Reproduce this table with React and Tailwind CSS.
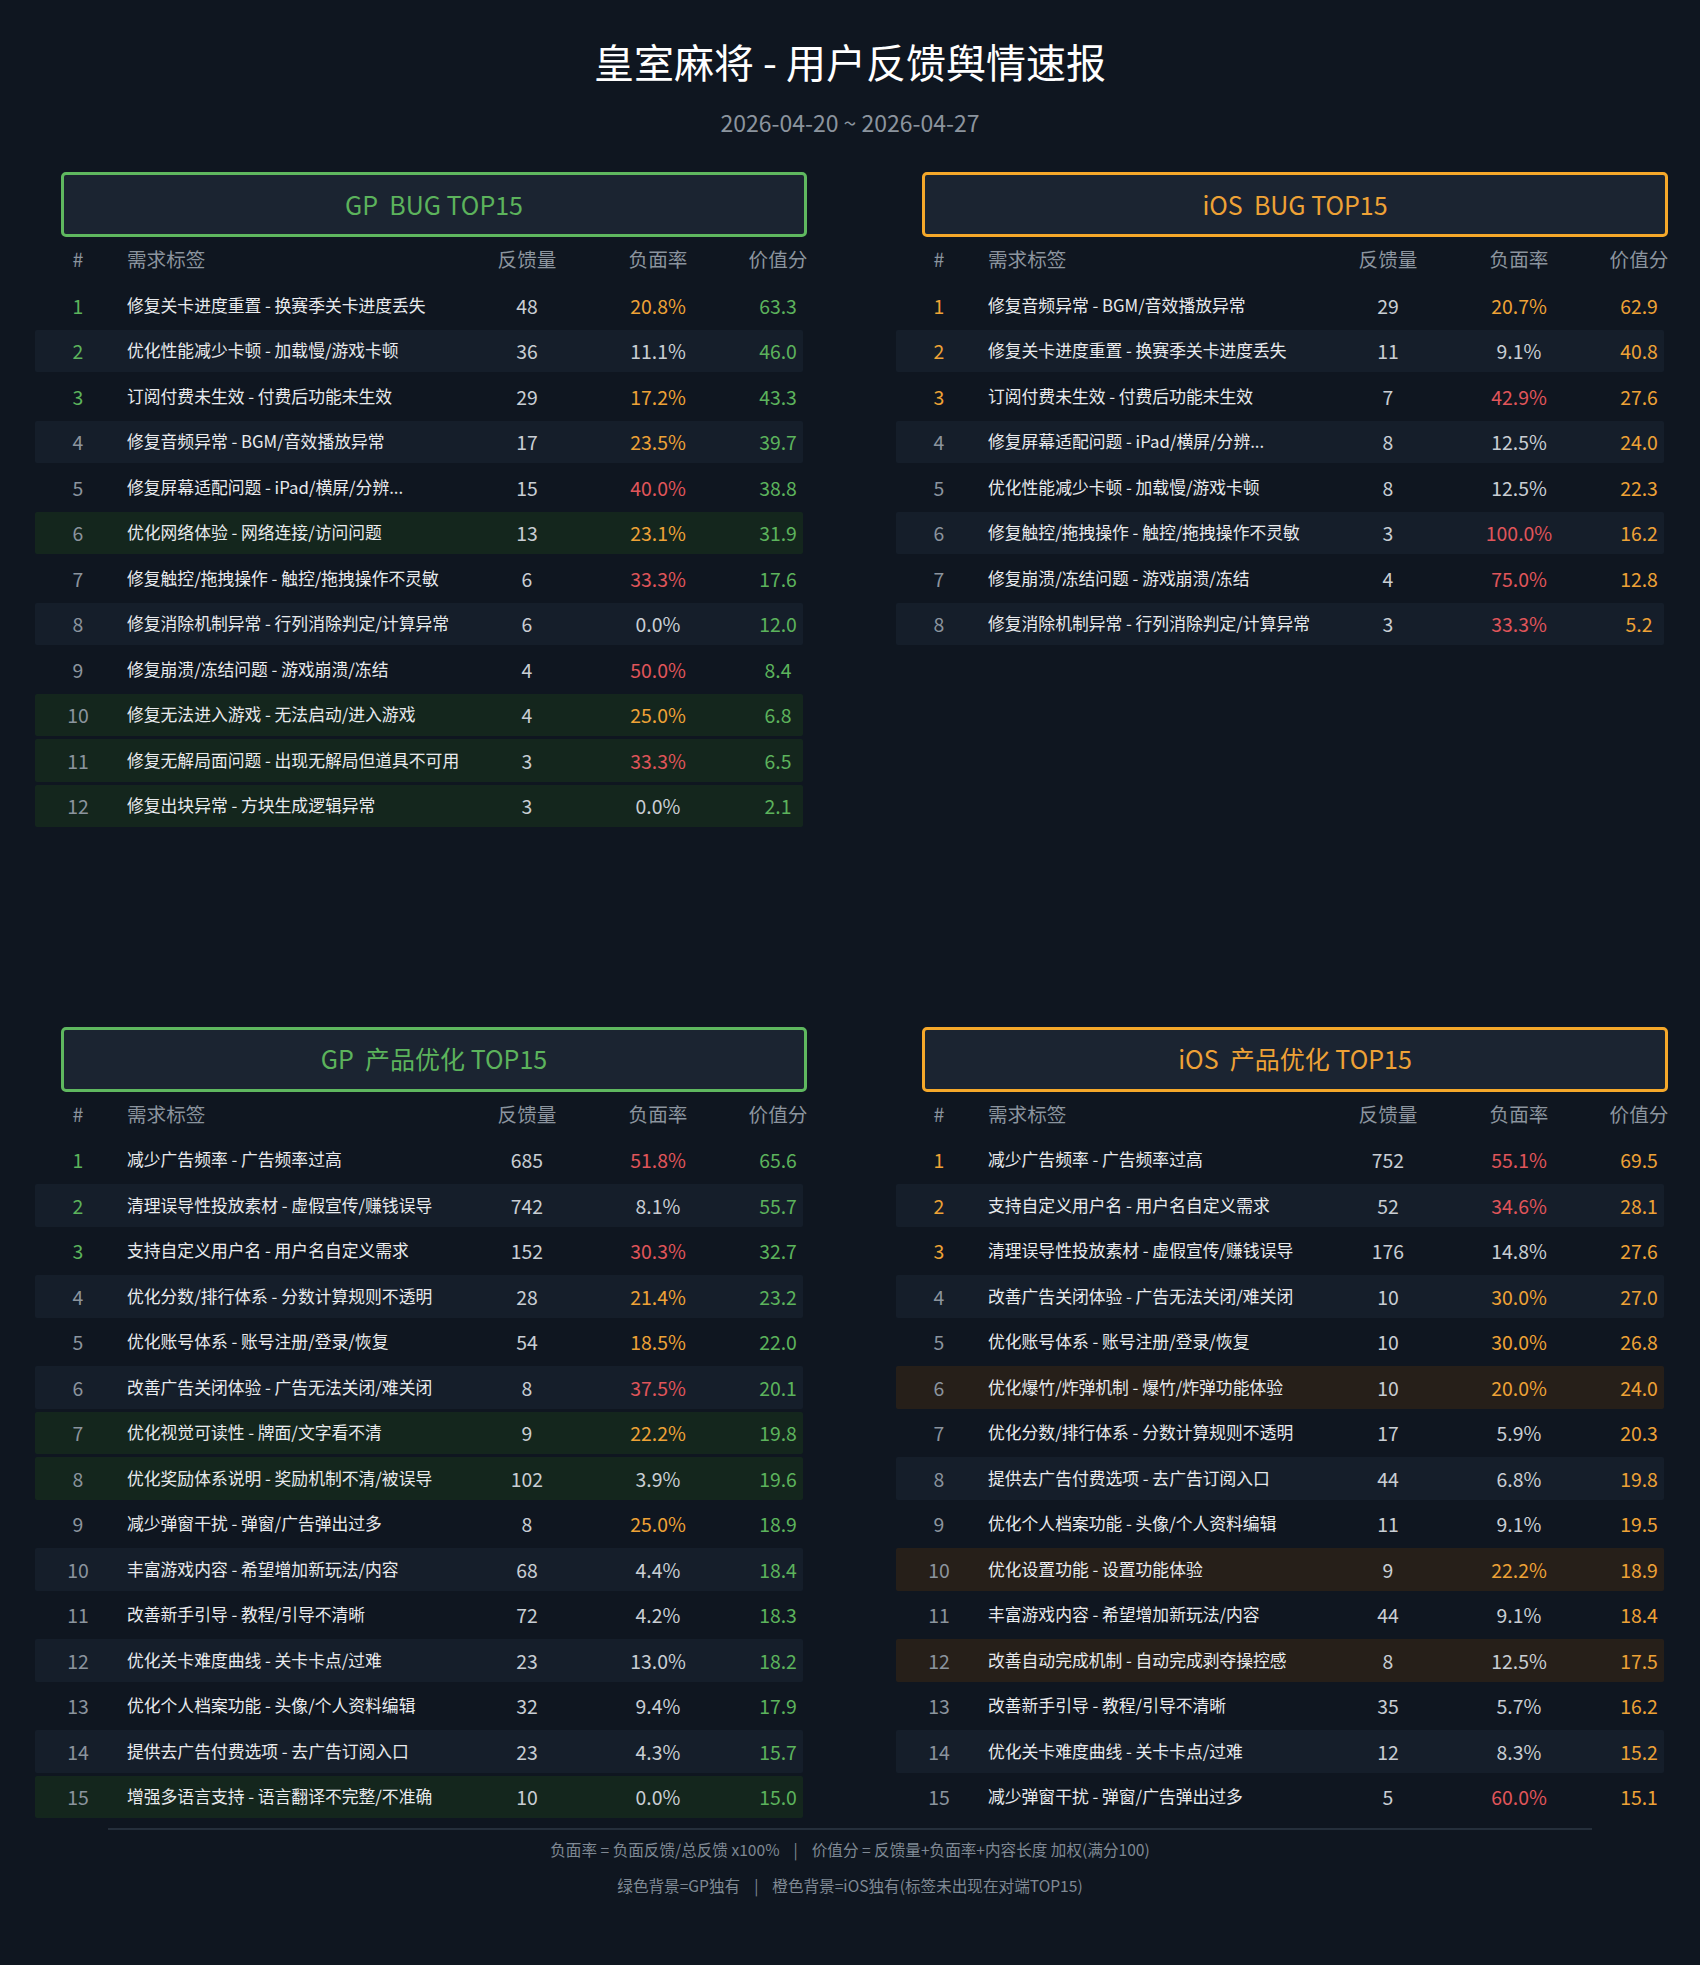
const gpBug = [
  ['修复关卡进度重置 - 换赛季关卡进度丢失', 48, 20.8, '63.3'],
  ['优化性能减少卡顿 - 加载慢/游戏卡顿', 36, 11.1, '46.0'],
  ['订阅付费未生效 - 付费后功能未生效', 29, 17.2, '43.3'],
  ['修复音频异常 - BGM/音效播放异常', 17, 23.5, '39.7'],
  ['修复屏幕适配问题 - iPad/横屏/分辨...', 15, 40.0, '38.8'],
  ['优化网络体验 - 网络连接/访问问题', 13, 23.1, '31.9', true],
  ['修复触控/拖拽操作 - 触控/拖拽操作不灵敏', 6, 33.3, '17.6'],
  ['修复消除机制异常 - 行列消除判定/计算异常', 6, 0.0, '12.0'],
  ['修复崩溃/冻结问题 - 游戏崩溃/冻结', 4, 50.0, '8.4'],
  ['修复无法进入游戏 - 无法启动/进入游戏', 4, 25.0, '6.8', true],
  ['修复无解局面问题 - 出现无解局但道具不可用', 3, 33.3, '6.5', true],
  ['修复出块异常 - 方块生成逻辑异常', 3, 0.0, '2.1', true],
];

const iosBug = [
  ['修复音频异常 - BGM/音效播放异常', 29, 20.7, '62.9'],
  ['修复关卡进度重置 - 换赛季关卡进度丢失', 11, 9.1, '40.8'],
  ['订阅付费未生效 - 付费后功能未生效', 7, 42.9, '27.6'],
  ['修复屏幕适配问题 - iPad/横屏/分辨...', 8, 12.5, '24.0'],
  ['优化性能减少卡顿 - 加载慢/游戏卡顿', 8, 12.5, '22.3'],
  ['修复触控/拖拽操作 - 触控/拖拽操作不灵敏', 3, 100.0, '16.2'],
  ['修复崩溃/冻结问题 - 游戏崩溃/冻结', 4, 75.0, '12.8'],
  ['修复消除机制异常 - 行列消除判定/计算异常', 3, 33.3, '5.2'],
];

const gpProduct = [
  ['减少广告频率 - 广告频率过高', 685, 51.8, '65.6'],
  ['清理误导性投放素材 - 虚假宣传/赚钱误导', 742, 8.1, '55.7'],
  ['支持自定义用户名 - 用户名自定义需求', 152, 30.3, '32.7'],
  ['优化分数/排行体系 - 分数计算规则不透明', 28, 21.4, '23.2'],
  ['优化账号体系 - 账号注册/登录/恢复', 54, 18.5, '22.0'],
  ['改善广告关闭体验 - 广告无法关闭/难关闭', 8, 37.5, '20.1'],
  ['优化视觉可读性 - 牌面/文字看不清', 9, 22.2, '19.8', true],
  ['优化奖励体系说明 - 奖励机制不清/被误导', 102, 3.9, '19.6', true],
  ['减少弹窗干扰 - 弹窗/广告弹出过多', 8, 25.0, '18.9'],
  ['丰富游戏内容 - 希望增加新玩法/内容', 68, 4.4, '18.4'],
  ['改善新手引导 - 教程/引导不清晰', 72, 4.2, '18.3'],
  ['优化关卡难度曲线 - 关卡卡点/过难', 23, 13.0, '18.2'],
  ['优化个人档案功能 - 头像/个人资料编辑', 32, 9.4, '17.9'],
  ['提供去广告付费选项 - 去广告订阅入口', 23, 4.3, '15.7'],
  ['增强多语言支持 - 语言翻译不完整/不准确', 10, 0.0, '15.0', true],
];

const iosProduct = [
  ['减少广告频率 - 广告频率过高', 752, 55.1, '69.5'],
  ['支持自定义用户名 - 用户名自定义需求', 52, 34.6, '28.1'],
  ['清理误导性投放素材 - 虚假宣传/赚钱误导', 176, 14.8, '27.6'],
  ['改善广告关闭体验 - 广告无法关闭/难关闭', 10, 30.0, '27.0'],
  ['优化账号体系 - 账号注册/登录/恢复', 10, 30.0, '26.8'],
  ['优化爆竹/炸弹机制 - 爆竹/炸弹功能体验', 10, 20.0, '24.0', true],
  ['优化分数/排行体系 - 分数计算规则不透明', 17, 5.9, '20.3'],
  ['提供去广告付费选项 - 去广告订阅入口', 44, 6.8, '19.8'],
  ['优化个人档案功能 - 头像/个人资料编辑', 11, 9.1, '19.5'],
  ['优化设置功能 - 设置功能体验', 9, 22.2, '18.9', true],
  ['丰富游戏内容 - 希望增加新玩法/内容', 44, 9.1, '18.4'],
  ['改善自动完成机制 - 自动完成剥夺操控感', 8, 12.5, '17.5', true],
  ['改善新手引导 - 教程/引导不清晰', 35, 5.7, '16.2'],
  ['优化关卡难度曲线 - 关卡卡点/过难', 12, 8.3, '15.2'],
  ['减少弹窗干扰 - 弹窗/广告弹出过多', 5, 60.0, '15.1'],
];

// negative rate colour: >30 red, >=15 orange, else plain
function rateColor(rate) {
  if (rate > 30) return 'text-[#e0555a]';
  if (rate >= 15) return 'text-[#eea236]';
  return 'text-[#c9ced4]';
}

function Panel({ platform, title, rows }) {
  const gp = platform === 'GP';
  const accent = gp ? 'text-[#5cb35c]' : 'text-[#eea236]';
  const uniqueBg = gp ? 'bg-[#14261d]' : 'bg-[#261f19]';

  return (
    <div className="w-[773px]">
      <div
        className={`ml-[26px] flex h-[65px] w-[746px] items-center justify-center rounded-[5px] border-[3px] bg-[#1b2431] text-[25px] ${
          gp ? 'border-[#5fb85f]' : 'border-[#f5a82a]'
        } ${accent}`}
      >
        <span className="whitespace-pre">
          {platform}
          {'  '}
          {title}
        </span>
      </div>

      <div className="flex h-[44px] w-[768px] items-center text-[19.6px] text-[#8b949e]">
        <div className="w-[86px] shrink-0 text-center">#</div>
        <div className="w-[341px] shrink-0 pl-[6px]">需求标签</div>
        <div className="w-[130px] shrink-0 text-center">反馈量</div>
        <div className="w-[132px] shrink-0 text-center">负面率</div>
        <div className="w-[108px] shrink-0 text-center">价值分</div>
      </div>

      <div className="h-[682.5px]">
        {rows.map(([label, count, rate, score, unique], i) => {
          const rank = i + 1;
          let bg = '';
          if (unique) bg = uniqueBg;
          else if (rank % 2 === 0) bg = 'bg-[#151e2a]';
          return (
            <div
              key={label}
              className={`mt-[3px] flex h-[42.5px] w-[768px] items-center rounded-[2px] text-[19.4px] ${bg}`}
            >
              <div
                className={`w-[86px] shrink-0 text-center ${
                  rank <= 3 ? accent : 'text-[#8b949e]'
                }`}
              >
                {rank}
              </div>
              <div className="w-[341px] shrink-0 whitespace-nowrap pl-[6px] text-[16.8px] text-[#e8eaed]">
                {label}
              </div>
              <div className="w-[130px] shrink-0 text-center text-[#c9ced4]">
                {count}
              </div>
              <div
                className={`w-[132px] shrink-0 text-center ${rateColor(rate)}`}
              >
                {rate.toFixed(1)}%
              </div>
              <div className={`w-[108px] shrink-0 text-center ${accent}`}>
                {score}
              </div>
            </div>
          );
        })}
      </div>
    </div>
  );
}

export default function App() {
  return (
    <div className="min-h-[1965px] bg-[#0f1620] pt-[37.5px] font-['Noto_Sans_CJK_SC','Noto_Sans',sans-serif]">
      <h1 className="text-center text-[40px] leading-[47px] text-white">
        皇室麻将 - 用户反馈舆情速报
      </h1>
      <p className="mt-[22px] text-center text-[23px] leading-[30px] text-[#8b949e]">
        2026-04-20 ~ 2026-04-27
      </p>

      <div className="mt-[35.5px] flex gap-[89px] px-[35px]">
        <Panel platform="GP" title="BUG TOP15" rows={gpBug} />
        <Panel platform="iOS" title="BUG TOP15" rows={iosBug} />
      </div>

      <div className="mt-[60px] flex gap-[89px] px-[35px]">
        <Panel platform="GP" title="产品优化 TOP15" rows={gpProduct} />
        <Panel platform="iOS" title="产品优化 TOP15" rows={iosProduct} />
      </div>

      <div className="mx-[108px] mt-[7px] border-t-2 border-[#252f3b]" />
      <div className="mt-[8px] text-center text-[15.6px] leading-[22px] text-[#7f8994]">
        <p className="whitespace-pre">
          负面率 = 负面反馈/总反馈 x100%{'    |    '}价值分 = 反馈量+负面率+内容长度 加权(满分100)
        </p>
        <p className="mt-[14px] whitespace-pre">
          绿色背景=GP独有{'    |    '}橙色背景=iOS独有(标签未出现在对端TOP15)
        </p>
      </div>
    </div>
  );
}
